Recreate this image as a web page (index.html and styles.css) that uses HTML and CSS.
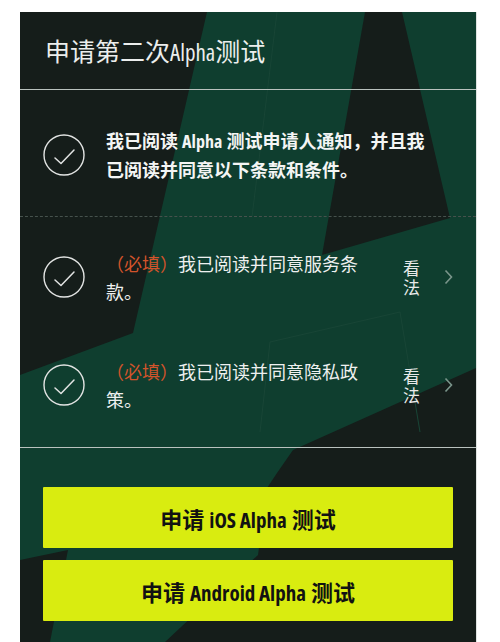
FILE: index.html
```html
<!DOCTYPE html>
<html lang="zh-CN">
<head>
<meta charset="utf-8">
<title>申请第二次Alpha测试</title>
<link rel="stylesheet" href="styles.css">
</head>
<body>
<div class="panel">
  <div class="header">
    <h1 class="title">申请第二次<span class="lat">Alpha</span>测试</h1>
  </div>

  <div class="row row-main">
    <svg class="check" width="42" height="42" viewBox="0 0 42 42"><circle cx="21" cy="21" r="20" fill="none" stroke="#e2e4e3" stroke-width="1.4"/><polyline points="12,24 18,29.5 31,16" fill="none" stroke="#e2e4e3" stroke-width="1.5" stroke-linecap="round" stroke-linejoin="round"/></svg>
    <p class="main-text">我已阅读 <span class="latb">Alpha</span> 测试申请人通知，并且我<br>已阅读并同意以下条款和条件。</p>
  </div>

  <div class="terms">
    <div class="row">
      <svg class="check" width="42" height="42" viewBox="0 0 42 42"><circle cx="21" cy="21" r="20" fill="none" stroke="#e2e4e3" stroke-width="1.4"/><polyline points="12,24 18,29.5 31,16" fill="none" stroke="#e2e4e3" stroke-width="1.5" stroke-linecap="round" stroke-linejoin="round"/></svg>
      <p class="term-text"><span class="req">（必填）</span>我已阅读并同意服务条款。</p>
      <span class="view">看法</span>
      <svg class="chev" width="9" height="16" viewBox="0 0 9 16"><polyline points="1.5,1.5 7.5,8 1.5,14.5" fill="none" stroke="#7a958b" stroke-width="1.6"/></svg>
    </div>
    <div class="row">
      <svg class="check" width="42" height="42" viewBox="0 0 42 42"><circle cx="21" cy="21" r="20" fill="none" stroke="#e2e4e3" stroke-width="1.4"/><polyline points="12,24 18,29.5 31,16" fill="none" stroke="#e2e4e3" stroke-width="1.5" stroke-linecap="round" stroke-linejoin="round"/></svg>
      <p class="term-text"><span class="req">（必填）</span>我已阅读并同意隐私政策。</p>
      <span class="view">看法</span>
      <svg class="chev" width="9" height="16" viewBox="0 0 9 16"><polyline points="1.5,1.5 7.5,8 1.5,14.5" fill="none" stroke="#7a958b" stroke-width="1.6"/></svg>
    </div>
  </div>

  <div class="actions">
    <button class="btn">申请 <span class="latb">iOS Alpha</span> 测试</button>
    <button class="btn">申请 <span class="latb">Android Alpha</span> 测试</button>
  </div>
</div>
</body>
</html>
```

FILE: styles.css
```css
html, body {
  margin: 0;
  padding: 0;
  background: #ffffff;
}

body {
  font-family: "Noto Sans CJK SC", "Noto Sans", sans-serif;
  color: #f0f2f1;
  height: 642px;
  overflow: hidden;
}

.panel {
  margin: 12px 0 0 20px;
  width: 456px;
  height: 630px;
  box-shadow: 1px 0 0 #dfe3e1;
  background-color: #0f3e2f;
  background-image: url("data:image/svg+xml,%3Csvg xmlns='http://www.w3.org/2000/svg' width='456' height='630' viewBox='0 0 456 630'%3E%3Crect width='456' height='630' fill='%230f3e2f'/%3E%3Cg fill='%23151d1a'%3E%3Cpolygon points='0,0 187,0 113,321 0,363'/%3E%3Cpolygon points='345,0 382,0 430,206 302,243'/%3E%3Cpolygon points='456,356 273,438 257,461 247,476 238,543 145,630 456,630'/%3E%3Cpolygon points='0,548 48,538 30,630 0,630'/%3E%3C/g%3E%3Cg fill='none' stroke='%23184536' stroke-width='1'%3E%3Cline x1='257' y1='0' x2='232' y2='205'/%3E%3Cpolyline points='240,420 250,330 380,300 400,420'/%3E%3C/g%3E%3C/svg%3E");
  background-repeat: no-repeat;
  display: flex;
  flex-direction: column;
}

.header {
  height: 77px;
  display: flex;
  align-items: center;
  padding-left: 25px;
  border-bottom: 1px solid #b9c2be;
}

.title {
  margin: 0;
  font-size: 25px;
  font-weight: 400;
  color: #eceeed;
  line-height: 30px;
}

.lat, .latb {
  font-family: "Open Sans", "DejaVu Sans", sans-serif;
  font-stretch: 75%;
  font-variation-settings: "wdth" 75;
}

.lat {
  font-size: 23px;
  font-weight: 400;
}

.latb {
  font-weight: 700;
}

.row {
  display: flex;
  align-items: center;
  padding-left: 23px;
}

.row-main {
  padding-top: 36px;
  padding-bottom: 33px;
  border-bottom: 1px dashed #46524d;
}

.check {
  flex: 0 0 42px;
  margin-right: 21px;
}

.main-text {
  margin: 0;
  font-size: 18px;
  font-weight: 700;
  line-height: 28px;
  color: #f4f5f4;
}

.main-text .latb {
  font-size: 18px;
}

.terms {
  display: flex;
  flex-direction: column;
  gap: 52px;
  padding-top: 32px;
  padding-bottom: 34px;
  border-bottom: 1px solid #b9c2be;
}

.term-text {
  margin: 0;
  flex: 0 0 260px;
  font-size: 18px;
  font-weight: 400;
  line-height: 28px;
  color: #eef0ef;
}

.req {
  color: #d2542b;
}

.view {
  margin-left: 37px;
  width: 17px;
  font-size: 17px;
  line-height: 19px;
  color: #e8eae9;
}

.chev {
  margin-left: 24px;
}

.actions {
  display: flex;
  flex-direction: column;
  gap: 12px;
  padding: 39px 23px 0 23px;
}

.btn {
  height: 61px;
  width: 410px;
  border: none;
  border-radius: 1px;
  background: #d9ec10;
  color: #121212;
  font-family: "Noto Sans CJK SC", "Noto Sans", sans-serif;
  font-size: 22px;
  font-weight: 700;
  padding: 0;
  cursor: pointer;
}

.btn .latb {
  font-size: 21px;
}
```
